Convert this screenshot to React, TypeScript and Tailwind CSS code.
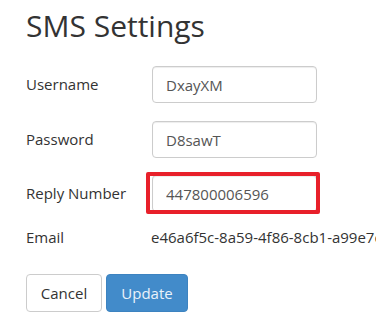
import React from 'react';

const font = { fontFamily: '"Open Sans", "Noto Sans", sans-serif' };

function Field({ label, value, highlight }: { label: string; value: string; highlight?: boolean }) {
  return (
    <div className="flex items-center">
      <label className="w-[126px] shrink-0 text-[15px] text-[#333]">{label}</label>
      <div className="relative">
        <input
          readOnly
          value={value}
          className="w-[165px] h-[37px] px-[13px] text-[15px] text-[#555] bg-white border border-[#ccc] rounded-[4px] shadow-[inset_0_1px_1px_rgba(0,0,0,0.075)] outline-none"
          style={font}
        />
        {highlight && (
          <div className="absolute -left-[6px] -right-[3px] -top-[3px] -bottom-[2px] border-4 border-[#e8202a] rounded-[2px] pointer-events-none" />
        )}
      </div>
    </div>
  );
}

export default function App() {
  return (
    <div className="w-[376px] h-[318px] overflow-hidden bg-white pl-[26px] pt-[8px]" style={font}>
      <h1 className="text-[30px] leading-[36px] text-[#333] font-normal">SMS Settings</h1>

      <div className="mt-[22px] flex flex-col">
        <Field label="Username" value="DxayXM" />
        <div className="mt-[18px]">
          <Field label="Password" value="D8sawT" />
        </div>
        <div className="mt-[17px]">
          <Field label="Reply Number" value="447800006596" highlight />
        </div>
        <div className="mt-[15px] flex items-center h-[20px] whitespace-nowrap">
          <span className="w-[125px] shrink-0 text-[15px] text-[#333]">Email</span>
          <span className="text-[15px] text-[#333]">e46a6f5c-8a59-4f86-8cb1-a99e7c2d41f0@sms.example.com</span>
        </div>
      </div>

      <div className="mt-[27px] flex gap-[4px]">
        <button className="w-[76px] h-[38px] text-[15px] text-[#333] bg-white border border-[#ccc] rounded-[4px]">
          Cancel
        </button>
        <button className="w-[82px] h-[38px] text-[15px] text-[#eaf2fa] bg-[#428bca] border border-[#3d83c0] rounded-[4px]">
          Update
        </button>
      </div>
    </div>
  );
}
